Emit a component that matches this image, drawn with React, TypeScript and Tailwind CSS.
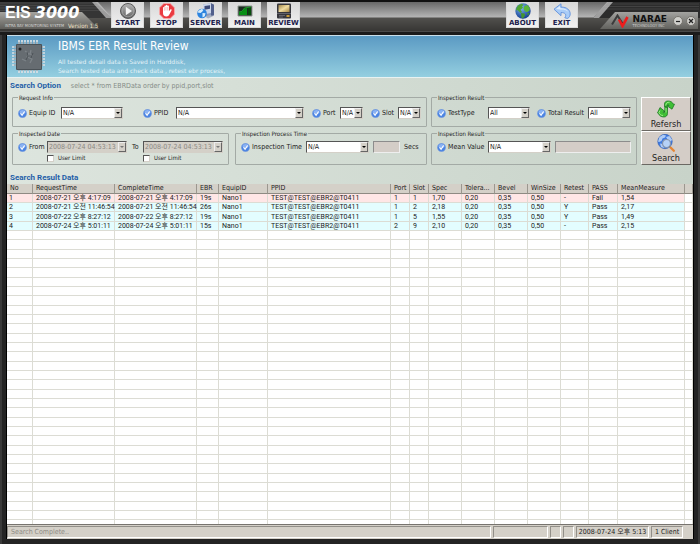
import type { ReactNode } from 'react';
import clsx from 'clsx';

const columns = [
  { name: 'No', width: 'w-[26px]' },
  { name: 'RequestTime', width: 'w-[82px]' },
  { name: 'CompleteTime', width: 'w-[82px]' },
  { name: 'EBR', width: 'w-[22px]' },
  { name: 'EquipID', width: 'w-[49px]' },
  { name: 'PPID', width: 'w-[123px]' },
  { name: 'Port', width: 'w-[19px]' },
  { name: 'Slot', width: 'w-[19px]' },
  { name: 'Spec', width: 'w-[33px]' },
  { name: 'Tolera...', width: 'w-[33px]' },
  { name: 'Bevel', width: 'w-[33px]' },
  { name: 'WinSize', width: 'w-[33px]' },
  { name: 'Retest', width: 'w-[28px]' },
  { name: 'PASS', width: 'w-[29px]' },
  { name: 'MeanMeasure', width: 'w-[67px]' },
  { name: '', width: '' },
];

const results = [
  ['1', '2008-07-21 오후 4:17:09', '2008-07-21 오후 4:17:09', '19s', 'Nano1', 'TEST@TEST@EBR2@T0411', '1', '1', '1,70', '0,20', '0,35', '0,50', '-', 'Fail', '1,54'],
  ['2', '2008-07-21 오전 11:46:54', '2008-07-21 오전 11:46:54', '26s', 'Nano1', 'TEST@TEST@EBR2@T0411', '1', '2', '2,18', '0,20', '0,35', '0,50', 'Y', 'Pass', '2,17'],
  ['3', '2008-07-22 오후 8:27:12', '2008-07-22 오후 8:27:12', '19s', 'Nano1', 'TEST@TEST@EBR2@T0411', '1', '5', '1,55', '0,20', '0,35', '0,50', 'Y', 'Pass', '1,49'],
  ['4', '2008-07-24 오후 5:01:11', '2008-07-24 오후 5:01:11', '15s', 'Nano1', 'TEST@TEST@EBR2@T0411', '2', '9', '2,10', '0,20', '0,35', '0,50', '-', 'Pass', '2,15'],
];

const emptyRows = Array.from({ length: 120 }, (_, i) => i);

function StartIcon() {
  return (
    <svg viewBox="0 0 16 16" className="h-4 w-4">
      <defs>
        <linearGradient id="start" x1="0" y1="0" x2="0" y2="1">
          <stop offset="0" stopColor="#b5b5b5" />
          <stop offset="1" stopColor="#636363" />
        </linearGradient>
      </defs>
      <circle cx="8" cy="8" r="7.5" fill="url(#start)" stroke="#5a5a5a" />
      <circle cx="8" cy="8" r="5.8" fill="none" stroke="#a6a6a6" strokeWidth="0.7" />
      <path d="M5.8 3.8 12 8l-6.2 4.2z" fill="#f4f4f4" />
    </svg>
  );
}

function StopIcon() {
  return (
    <svg viewBox="0 0 16 16" className="h-4 w-4">
      <path d="M4.8.5h6.4l4.3 4.3v6.4l-4.3 4.3H4.8L.5 11.2V4.8z" fill="#ea3a40" stroke="#f7a3a4" />
      <path
        d="M4 9V4.800c0-1 1.400-1 1.400 0V3.200c0-1 1.500-1 1.500 0v-.6c0-1 1.500-1 1.500 0v.6c0-1 1.500-1 1.500 0v5l1.200-1.500c.8-.8 1.900-.1 1.400.7l-2.300 4.400c-.6 1.200-1.500 1.700-2.700 1.700C5 13.500 4 12 4 10z"
        fill="#fff"
      />
      <path d="M5.400 4.800v3M6.900 4v3.500M8.400 4v3.500" stroke="#ea3a40" strokeWidth="0.300" />
    </svg>
  );
}

function ServerIcon() {
  return (
    <svg viewBox="0 0 18 16" className="h-4 w-[18px]">
      <path d="m6 1.500 8-1.300 3 1.500v10.500l-6 1.500-5-2z" fill="#8b9abb" />
      <path d="m6 1.500 8-1.300v9.800L6 11.500z" fill="#cbd5e8" />
      <path d="m7.500 3 5.500-.8v3.500l-5.500 1z" fill="#3c4a78" />
      <path d="m14 .2 3 1.500v10.500l-3 .8z" fill="#52608c" />
      <path d="M8 13.500 13 12l3 1.200-5 2.300z" fill="#a7afc0" />
      <circle cx="5" cy="10.500" r="4.800" fill="#2c84df" />
      <path d="M1.500 7.800 4.500 6l2 .8-1.300 2L3.500 10l-2.800-.5zM5.500 10l3 .3-.7 3-2.300 1.200z" fill="#d8edfb" />
    </svg>
  );
}

function MainIcon() {
  return (
    <svg viewBox="0 0 16 12" className="h-3 w-4">
      <path fill="#1c2a20" d="M1 1h14v10H1z" stroke="#8f9790" />
      <path d="M2 10V7.500l3-.8 2.500-3L10 3v7z" fill="#078f14" />
      <path d="M11 10V3l3-1v8z" fill="#064d0a" />
      <path d="m2 7 3-.7L7.500 3 14 1.800" stroke="#1fc52e" strokeWidth="0.700" fill="none" />
    </svg>
  );
}

function ReviewIcon() {
  return (
    <svg viewBox="0 0 16 16" className="h-4 w-4">
      <defs>
        <linearGradient id="screen" x1="0" y1="0" x2="1" y2="1">
          <stop offset="0" stopColor="#9c8347" />
          <stop offset="0.5" stopColor="#f0dca0" />
          <stop offset="1" stopColor="#a58543" />
        </linearGradient>
      </defs>
      <rect x="1" y="0.500" width="14" height="15" rx="1" fill="#36363c" />
      <rect x="2.500" y="2" width="11" height="7" fill="url(#screen)" />
      <path d="M1 10.500h14" stroke="#6f6f77" strokeWidth="0.800" />
      <path d="M3 12.500h6M3 14h4" stroke="#85858c" strokeWidth="0.600" />
      <rect x="10.500" y="12" width="3" height="2" fill="#c79a3a" />
    </svg>
  );
}

function AboutIcon() {
  return (
    <svg viewBox="0 0 16 16" className="h-4 w-4">
      <defs>
        <radialGradient id="globe" cx="0.4" cy="0.3" r="0.7">
          <stop offset="0" stopColor="#7db4ee" />
          <stop offset="1" stopColor="#153f92" />
        </radialGradient>
      </defs>
      <circle cx="8" cy="8" r="7.700" fill="url(#globe)" />
      <path d="M3 2.500 6.500.8l2 1L7 3.500l1 1.300-2.500 2L7 9l-1.500 1-3-3L1 7.500 1.500 5z" fill="#4fa532" />
      <path d="m9.500 3 3-1 2.300 3-.3 2.500-2.300 1.800L9.500 8 8.500 5z" fill="#5cb43a" />
      <path d="m6 10 3.500.5.5 2-2 3-1.500-.8zM12 10.500l2.500-.8-1.500 3z" fill="#43952d" />
    </svg>
  );
}

function ExitIcon() {
  return (
    <svg viewBox="0 0 18 16" className="h-4 w-[18px]">
      <path
        d="M1 6.200 8 .8v3.300c6-.2 9.200 3.200 9.200 6.800 0 2-1 3.500-2.400 4.500-.9 0-2.300-.2-3-.7 2.200-3 .4-5.200-3.800-5.200v3.200z"
        fill="#a9ccf7"
        stroke="#6190db"
        strokeWidth="0.900"
      />
      <path d="m3 6 4-3v2.200c4-.2 7 1 8.300 3.500C13 6.800 10 6.300 7 6.600z" fill="#e2effe" />
    </svg>
  );
}

function RefreshIcon() {
  return (
    <svg viewBox="0 0 18 18" className="h-[18px] w-[18px]">
      <g stroke="#13701b" strokeWidth="0.700" fill="#3fbf36">
        <path d="M7.500 6.500V4C7.500 2 9 1 11 1c2.500 0 4.500 1 5 3l1.500.2-2.500 5-5-3.400 2-.3c-.3-1.200-2-1.200-2 .3l.5 3z" />
        <path d="M10.500 11v2.500c0 2-1.500 3.500-3.500 3.500-2.500 0-4.800-1-5.500-3.500L.5 13 3 7.500l5 4-2 .5c.3 1.200 1.800 1 1.800-.5V6.500l2.700 1z" />
      </g>
      <path d="M8.800 5.500C8.800 3 10.500 2 12.500 2.300M3 10.500l-1 2C2.800 14.500 4 15.500 6 15.500M9 8v4.500" stroke="#b3f59a" strokeWidth="0.800" fill="none" />
    </svg>
  );
}

function SearchIcon() {
  return (
    <svg viewBox="0 0 18 18" className="h-[18px] w-[18px]">
      <circle cx="8" cy="7.500" r="7.200" fill="#3f7ae0" stroke="#2857b0" strokeWidth="0.600" />
      <path d="M2.500 3 6 .8l3 .8-1 2-2.500 1L4.500 7 2 8l-1-.5zM9 3l3.500-1L15 5.500l-1 2-3-1.500zM3 9.500l3 .5L7 14l-3-1z" fill="#aecbf5" />
      <circle cx="9.500" cy="9.500" r="4" fill="#d4e8fc" fillOpacity="0.800" stroke="#8594ac" strokeWidth="1.200" />
      <path d="m12.500 12.500 1.200 1.200" stroke="#777" strokeWidth="1.500" />
      <path d="m13.800 13.800 3 3" stroke="#e58634" strokeWidth="2.300" strokeLinecap="round" />
    </svg>
  );
}

function CheckDot() {
  return (
    <svg viewBox="0 0 9 9" className="h-[9px] w-[9px] shrink-0">
      <circle cx="4.500" cy="4.500" r="4.200" fill="#4b84e2" stroke="#8fabdc" strokeWidth="0.500" />
      <ellipse cx="4.500" cy="3" rx="3" ry="2" fill="#8bb3f3" />
      <path d="m2.500 4.300 1.600 2 2.500-3.800" stroke="#fff" strokeWidth="1.100" fill="none" />
    </svg>
  );
}

function ChipIcon() {
  const pins = [8, 11, 14, 17, 20, 23, 26];
  return (
    <svg viewBox="0 0 35 35" className="h-[35px] w-[35px]">
      {pins.map((p) => (
        <path key={p} d={`M${p} 1v33M1 ${p}h33`} stroke="#d9e0e4" strokeWidth="1.700" />
      ))}
      {pins.map((p) => (
        <path key={p} d={`M${p} 3v29M3 ${p}h29`} stroke="#5e6e76" strokeWidth="0.700" />
      ))}
      <rect x="5" y="5" width="26" height="26" rx="1" fill="#4b5257" />
      <rect x="6" y="6" width="24" height="24" fill="#666c71" />
      <path d="m14 12 4 3-2 3 5 2-2 4M20 11l-1 4 3 2M11 20l4 2" stroke="#7c8287" strokeWidth="1.300" fill="none" />
      <path d="m16 13 1 4-2 4M22 14l-2 5" stroke="#4c5257" strokeWidth="1" fill="none" />
      <circle cx="9" cy="10" r="1.500" fill="#202325" />
    </svg>
  );
}

function LeftPlate() {
  return (
    <svg viewBox="0 0 120 31" className="absolute top-0 left-0 h-[31px] w-[120px]">
      <defs>
        <linearGradient id="leftPlate" x1="0" y1="0" x2="0" y2="1">
          <stop offset="0" stopColor="#a5a49f" />
          <stop offset="1" stopColor="#5f5e5a" />
        </linearGradient>
      </defs>
      <path d="M0 2h95l17 16H0z" fill="#353535" />
      <path d="M0 3h96M0 5.500h98M0 8h101M0 10.500h104" stroke="#4b4b4b" strokeWidth="0.800" />
      <path d="M92 2h6l14 16h-6z" fill="#c9c9c9" fillOpacity="0.700" />
      <path d="M0 12h82l17 17H0z" fill="url(#leftPlate)" />
    </svg>
  );
}

function RightPlate() {
  return (
    <svg viewBox="0 0 107 31" className="absolute top-0 right-0 h-[31px] w-[107px]">
      <defs>
        <linearGradient id="rightPlate" x1="0" y1="0" x2="0" y2="1">
          <stop offset="0" stopColor="#a3a3a0" />
          <stop offset="1" stopColor="#62625e" />
        </linearGradient>
      </defs>
      <path d="M15 2h92v16H0z" fill="#2c2c2c" />
      <path d="M14 4h92M12 6.500h94M10 9h96" stroke="#474747" strokeWidth="0.800" />
      <path d="M14 2h6L6 18H0z" fill="#bdbdbd" fillOpacity="0.800" />
      <path d="M22 12h83v17H7z" fill="url(#rightPlate)" />
    </svg>
  );
}

function NaraeLogo() {
  return (
    <svg viewBox="0 0 18 14" className="h-[14px] w-[18px]">
      <path d="m1 10.500 5.500-9 5 8" stroke="#3b3b3b" strokeWidth="2" fill="none" />
      <path d="m8 5.500 3.500 6.500 5-9" stroke="#ed1c1c" strokeWidth="2.600" fill="none" />
    </svg>
  );
}

function ToolButton({ label, children }: { label: string; children: ReactNode }) {
  return (
    <button className="flex h-[26px] w-[33px] flex-col items-center justify-between border border-[#d9d9d9] bg-linear-to-b from-[#d9d9d9] to-[#f1f1f1] hover:brightness-110">
      <span className="flex h-4 items-center">{children}</span>
      <span className="font-['DejaVu_Sans'] text-[7px] leading-[8px] font-bold text-[#1c1c4c]">{label}</span>
    </button>
  );
}

function Header() {
  return (
    <header className="relative flex h-[31px] shrink-0 items-start justify-between bg-[linear-gradient(#111_2px,#686868_2px,#b4b4b4_17px,#51504d_18px,#373634_31px)] pt-[2px]">
      <LeftPlate />
      <RightPlate />
      <div className="relative flex">
        <div className="w-[111px] pt-[3px] pl-[5px] text-white">
          <h1 className="flex items-center gap-1 leading-[16px] font-bold">
            <span className="font-['Liberation_Sans'] text-[16px]">EIS</span>
            <span className="font-['DejaVu_Sans'] text-[16px] italic">3000</span>
          </h1>
          <p className="flex items-center gap-1 pt-[2px] leading-[6px] whitespace-nowrap">
            <span className="text-[4px] text-[#d5d5d5]">INTRA BAY MONITORING SYSTEM</span>
            <span className="text-[6px] text-[#f0e2c8]">Version 1.5</span>
          </p>
        </div>
        <nav className="flex gap-[6px]">
          <ToolButton label="START"><StartIcon /></ToolButton>
          <ToolButton label="STOP"><StopIcon /></ToolButton>
          <ToolButton label="SERVER"><ServerIcon /></ToolButton>
          <ToolButton label="MAIN"><MainIcon /></ToolButton>
          <ToolButton label="REVIEW"><ReviewIcon /></ToolButton>
        </nav>
      </div>
      <div className="relative flex">
        <nav className="flex gap-[6px]">
          <ToolButton label="ABOUT"><AboutIcon /></ToolButton>
          <ToolButton label="EXIT"><ExitIcon /></ToolButton>
        </nav>
        <div className="flex w-[122px] items-center justify-end gap-[3px] pt-3 pr-1">
          <NaraeLogo />
          <div className="pr-[3px] whitespace-nowrap">
            <p className="font-['DejaVu_Sans'] text-[9px] leading-[8px] font-bold text-[#111]">NARAE</p>
            <p className="text-[4px] leading-[5px] text-[#ccc]">TECHNOLOGY INC</p>
          </div>
          <button aria-label="Minimize" className="h-[10px] w-[10px] text-[#222]">
            <svg viewBox="0 0 10 10">
              <circle cx="5" cy="5" r="4.500" fill="#cfcfcb" stroke="#77746e" />
              <path d="M3 5.500h4" stroke="currentColor" strokeWidth="1.200" />
            </svg>
          </button>
          <button aria-label="Close" className="h-[10px] w-[10px] text-[#222]">
            <svg viewBox="0 0 10 10">
              <circle cx="5" cy="5" r="4.500" fill="#cfcfcb" stroke="#77746e" />
              <path d="m3 3 4 4m0-4L3 7" stroke="currentColor" strokeWidth="1.200" />
            </svg>
          </button>
        </div>
      </div>
    </header>
  );
}

function Banner() {
  return (
    <div className="flex h-[43px] shrink-0 items-center border-t border-b border-t-[#c9dfea] border-b-[#e8f2f2] bg-linear-to-b from-[#5b9ac3] to-[#94cfe0] pl-1 text-white">
      <ChipIcon />
      <div className="pl-3">
        <h2 className="text-[12px] leading-[16px]">IBMS EBR Result Review</h2>
        <p className="pt-[3px] font-['DejaVu_Sans'] text-[6px] leading-[9px] text-[#e4f3f8]">
          All tested detail data is Saved in Harddisk,
          <br />
          Search tested data and check data , retest ebr process,
        </p>
      </div>
    </div>
  );
}

function Group({ title, className, children }: { title: string; className?: string; children: ReactNode }) {
  return (
    <fieldset className={clsx('min-w-0 rounded-[1px] border border-[#a3aaa5] px-[5px]', className)}>
      <legend className="px-px text-[6px] leading-[9px]">{title}</legend>
      {children}
    </fieldset>
  );
}

type DropDownProps = { id: string; value: string; width: string; disabled?: boolean };

function DropDown({ id, value, width, disabled }: DropDownProps) {
  return (
    <span className={clsx('relative block h-3 shrink-0', width)}>
      <select
        id={id}
        disabled={disabled}
        className={clsx(
          'block h-3 w-full appearance-none border border-t-[#555] border-r-[#d4d0c8] border-b-[#d4d0c8] border-l-[#555] pl-px text-[7px] leading-[10px] opacity-100',
          disabled ? 'bg-[#d4d0c8] text-[#8a8782]' : 'bg-white text-[#222]',
        )}
      >
        <option>{value}</option>
      </select>
      <span className="pointer-events-none absolute top-px right-px flex h-[10px] w-2 items-center justify-center border border-t-[#eee] border-r-[#666] border-b-[#666] border-l-[#eee] bg-[#d4d0c8]">
        <svg viewBox="0 0 4 2" className="h-[2px] w-1">
          <path d="M0 0h4L2 2z" fill={disabled ? '#777' : '#000'} />
        </svg>
      </span>
    </span>
  );
}

type FieldProps = DropDownProps & { label: string; labelWidth: string };

function Field({ label, labelWidth, ...rest }: FieldProps) {
  return (
    <div className="flex items-center gap-[2px]">
      <CheckDot />
      <label htmlFor={rest.id} className={clsx('shrink-0 whitespace-nowrap', labelWidth)}>{label}</label>
      <DropDown {...rest} />
    </div>
  );
}

function LimitCheck({ id }: { id: string }) {
  return (
    <label htmlFor={id} className="flex items-center gap-1 pt-px text-[6px] leading-[8px]">
      <input
        id={id}
        type="checkbox"
        className="h-[7px] w-[7px] appearance-none border border-t-[#555] border-r-[#d4d0c8] border-b-[#d4d0c8] border-l-[#555] bg-white checked:bg-[#4b84e2]"
      />
      User Limit
    </label>
  );
}

function ActionButton({ label, children }: { label: string; children: ReactNode }) {
  return (
    <button className="flex h-[34px] w-full flex-col items-center justify-between border border-t-white border-r-[#6b6863] border-b-[#6b6863] border-l-white bg-[#d4cdc7] pt-[2px] active:bg-[#c4bdb7]">
      {children}
      <span className="text-[9px] leading-[12px]">{label}</span>
    </button>
  );
}

function SearchForm() {
  const box = 'h-3 min-w-0 border border-t-[#8c8c8c] border-r-[#eee] border-b-[#eee] border-l-[#8c8c8c] bg-[#d4cdc7] text-[7px]';
  const heading = 'font-[Roboto,sans-serif] text-[8px] font-bold text-[#1f5fa8]';
  return (
    <form
      className="shrink-0 bg-linear-to-r from-[#dde5de] to-[#c8d3c9] text-[7px] text-[#222]"
      onSubmit={(e) => e.preventDefault()}
    >
      <div className="flex h-[15px] items-center gap-[10px] pl-[3px] leading-[12px]">
        <h3 className={heading}>Search Option</h3>
        <span className="text-[#858c87]">select * from EBRData order by ppid,port,slot</span>
      </div>
      <div className="flex gap-1 pr-[2px] pl-[5px]">
        <div className="flex flex-1 flex-col gap-[2px]">
          <Group title="Request Info" className="h-[34px]">
            <div className="flex h-[22px] items-center gap-2">
              <Field id="equip" label="Equip ID" labelWidth="w-[30px]" value="N/A" width="w-[62px]" />
              <div className="ml-auto flex gap-2">
                <Field id="ppid" label="PPID" labelWidth="w-5" value="N/A" width="w-[128px]" />
                <Field id="port" label="Port" labelWidth="w-[15px]" value="N/A" width="w-[23px]" />
                <Field id="slot" label="Slot" labelWidth="w-[14px]" value="N/A" width="w-[23px]" />
              </div>
            </div>
          </Group>
          <div className="flex gap-[6px]">
            <Group title="Inspected Date" className="h-9 w-[217px]">
              <div className="flex gap-[5px] pt-[3px]">
                <div>
                  <Field id="from" label="From" labelWidth="w-4" value="2008-07-24 04:53:13" width="w-20" disabled />
                  <div className="pl-[29px]"><LimitCheck id="fromLimit" /></div>
                </div>
                <div>
                  <div className="flex">
                    <label htmlFor="to" className="w-[11px] leading-[12px]">To</label>
                    <DropDown id="to" value="2008-07-24 04:53:13" width="w-20" disabled />
                  </div>
                  <div className="pl-[11px]"><LimitCheck id="toLimit" /></div>
                </div>
              </div>
            </Group>
            <Group title="Inspection Process Time" className="h-9 flex-1">
              <div className="flex items-center gap-1 pt-[3px]">
                <Field id="time" label="Inspection Time" labelWidth="w-[52px]" value="N/A" width="w-[63px]" />
                <input id="secs" disabled className={clsx(box, 'w-[27px]')} />
                <label htmlFor="secs">Secs</label>
              </div>
            </Group>
          </div>
        </div>
        <div className="flex w-[206px] flex-col gap-[2px]">
          <Group title="Inspection Result" className="h-[34px]">
            <div className="flex h-[22px] items-center justify-between">
              <Field id="testType" label="TestType" labelWidth="w-[38px]" value="All" width="w-[42px]" />
              <Field id="total" label="Total Result" labelWidth="w-[38px]" value="All" width="w-[43px]" />
            </div>
          </Group>
          <Group title="Inspection Result" className="h-9">
            <div className="flex items-center gap-1 pt-[3px]">
              <Field id="mean" label="Mean Value" labelWidth="w-[38px]" value="N/A" width="w-[63px]" />
              <input aria-label="Mean limit" disabled className={clsx(box, 'flex-1')} />
            </div>
          </Group>
        </div>
        <div className="w-[50px] pt-1">
          <ActionButton label="Refersh"><RefreshIcon /></ActionButton>
          <ActionButton label="Search"><SearchIcon /></ActionButton>
        </div>
      </div>
      <h3 className={clsx(heading, 'pt-[7px] pl-[3px] leading-[12px]')}>Search Result Data</h3>
    </form>
  );
}

function ResultTable() {
  return (
    <div className="min-h-0 flex-1 overflow-hidden bg-white font-[Roboto,'Noto_Sans_CJK_KR',sans-serif] text-[7px] text-[#222]">
      <table className="w-full table-fixed border-separate border-spacing-0">
        <thead>
          <tr className="font-['DejaVu_Sans_Condensed','Noto_Sans',sans-serif]">
            {columns.map((col) => (
              <th
                key={col.name}
                className={clsx(
                  'h-[10px] overflow-hidden border-r border-b border-r-[#9b978f] border-b-[#8e8a83] bg-[#d4d0c8] p-0 pl-[3px] text-left leading-[9px] font-normal whitespace-nowrap',
                  col.width,
                )}
              >
                {col.name}
              </th>
            ))}
          </tr>
        </thead>
        <tbody>
          {results.map((row, i) => (
            <tr key={row[0]} className="h-[9px] nth-[3n]:h-[10px]">
              {columns.map((col, c) => (
                <td
                  key={col.name}
                  className={clsx(
                    'border-r border-b border-[#dcdcd4] p-0 pl-[3px] leading-[8px] whitespace-nowrap first:pl-[2px]',
                    c < row.length && (i === 0 ? 'bg-[#ffe6e6]' : 'bg-[#e3fdff]'),
                  )}
                >
                  {row[c]}
                </td>
              ))}
            </tr>
          ))}
          {emptyRows.map((n) => (
            <tr key={n} className="h-[9px] nth-[3n]:h-[10px]">
              {columns.map((col) => (
                <td key={col.name} className="border-r border-b border-[#dcdcd4] p-0" />
              ))}
            </tr>
          ))}
        </tbody>
      </table>
    </div>
  );
}

function StatusBar() {
  const panel = 'flex items-center border border-t-[#928f89] border-r-white border-b-white border-l-[#928f89] px-[3px] whitespace-nowrap';
  return (
    <footer className="flex h-[15px] shrink-0 gap-[2px] border-t border-[#77746f] bg-[#d4d0c8] py-px pr-[10px] text-[7px] text-[#222]">
      <div className={clsx(panel, 'flex-1 text-[#8f8c86]')}>Search Complete..</div>
      <div className={clsx(panel, 'w-[55px]')} />
      <div className={clsx(panel, 'w-[11px]')} />
      <div className={clsx(panel, 'w-[11px]')} />
      <div className={clsx(panel, 'w-[73px] justify-center')}>2008-07-24 오후 5:13</div>
      <div className={clsx(panel, 'w-8 justify-center')}>1 Client</div>
    </footer>
  );
}

function App() {
  return (
    <div className="flex h-screen flex-col bg-[#242424] font-['DejaVu_Sans_Condensed','Noto_Sans','Noto_Sans_CJK_KR',sans-serif]">
      <Header />
      <div className="h-1 shrink-0 border-t border-[#4a4a4a] bg-[#1b1b1b]" />
      <main className="flex min-h-0 flex-1 border-x-2 border-[#3a3a3a] px-1 pb-[5px]">
        <div className="flex min-w-0 flex-1 flex-col border-x border-black">
          <Banner />
          <SearchForm />
          <ResultTable />
          <StatusBar />
        </div>
      </main>
    </div>
  );
}

export default App;
